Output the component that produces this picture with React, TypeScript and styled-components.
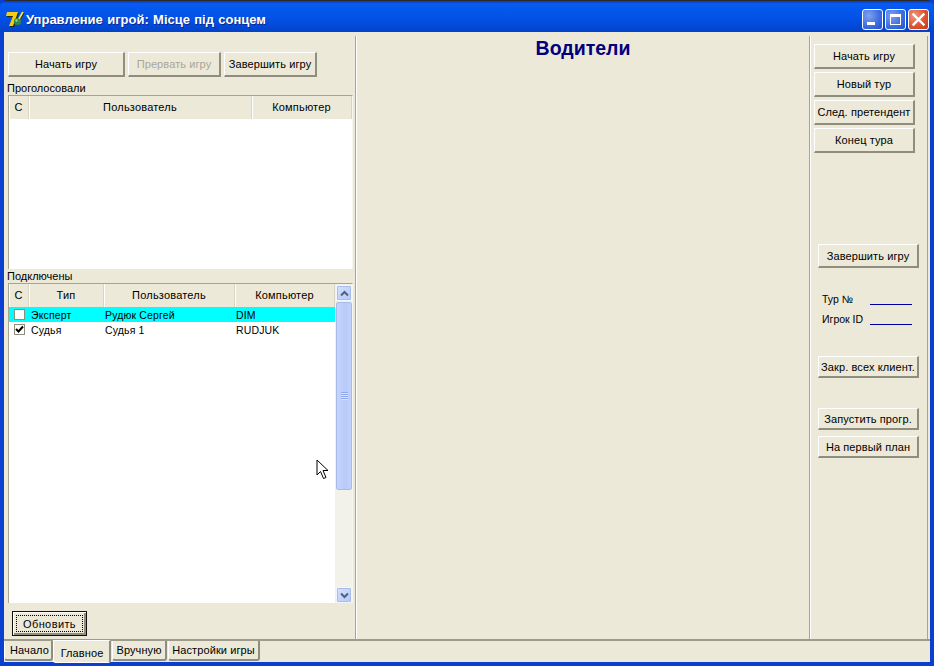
import React from "react";
import styled, { createGlobalStyle } from "styled-components";

const Global = createGlobalStyle`
  html, body { margin: 0; padding: 0; background: #0a3fd0; }
  body { font-family: "Liberation Sans", Arial, sans-serif; font-size: 11px; color: #000; }
  * { box-sizing: border-box; }
`;

const Window = styled.div`
  position: relative;
  width: 934px;
  height: 666px;
  overflow: hidden;
  display: flex;
  flex-direction: column;
  border-radius: 7px 7px 0 0;
  background: #0a3fd0;
`;

const TitleBar = styled.div`
  height: 32px;
  flex: none;
  display: flex;
  align-items: center;
  padding: 5px 5px 0 5px;
  background: linear-gradient(180deg, #0a3bc4 0%, #0a5cf0 10%, #0558ee 22%, #0353e6 50%, #0349d8 80%, #0242c8 100%);
  border-top: 1px solid #2a2a2a;
`;

const TitleText = styled.span`
  margin-left: 1px;
  font-size: 13px;
  font-weight: bold;
  color: #fff;
  word-spacing: 0.7px;
  text-shadow: 1px 1px 0 #0a2a90;
  flex: 1;
  white-space: nowrap;
`;

const WinButton = styled.div<{ $kind?: "close" }>`
  width: 21px;
  height: 21px;
  margin-left: 2px;
  border: 1px solid #fff;
  border-radius: 3px;
  display: flex;
  align-items: center;
  justify-content: center;
  background: ${(p) =>
    p.$kind === "close"
      ? "radial-gradient(circle at 30% 30%, #ef9a80, #e0532f 55%, #c23a1a)"
      : "radial-gradient(circle at 30% 30%, #7fa2f0, #3c6be0 60%, #2550c8)"};
`;

const Client = styled.div`
  flex: 1;
  min-height: 0;
  margin: 0 4px 4px 4px;
  background: #ece9d8;
  display: flex;
  flex-direction: column;
`;

const Panels = styled.div`
  height: 609px;
  flex: none;
  display: flex;
  align-items: stretch;
  padding: 4px 2px 0 0;
  border-bottom: 2px solid #9d9b8c;
`;

const LeftPanel = styled.div`
  width: 352px;
  flex: none;
  display: flex;
  flex-direction: column;
  padding: 16px 0 0 4px;
  border-right: 1px solid #a6a493;
`;

const CenterPanel = styled.div`
  width: 454px;
  flex: none;
  border-left: 1px solid #fff;
  border-right: 1px solid #a6a493;
  text-align: center;
  padding-top: 1px;
`;

const Heading = styled.h1`
  margin: 0;
  font-size: 19.5px;
  line-height: 23px;
  font-weight: bold;
  color: #000080;
`;

const RightPanel = styled.div`
  flex: 1;
  display: flex;
  flex-direction: column;
  border-left: 1px solid #fff;
  border-right: 1px solid #a6a493;
  padding: 8px 0 0 3px;
`;

const ButtonRow = styled.div`
  display: flex;
  gap: 3px;
`;

const Button = styled.button<{ $w: number; $h?: number; $disabled?: boolean; $indent?: number; $after?: number }>`
  width: ${(p) => p.$w}px;
  height: ${(p) => p.$h ?? 25}px;
  flex: none;
  padding: 0;
  margin: 0 0 ${(p) => p.$after ?? 0}px ${(p) => p.$indent ?? 0}px;
  font: 11px "Liberation Sans", Arial, sans-serif;
  letter-spacing: 0.1px;
  color: ${(p) => (p.$disabled ? "#a8a698" : "#000")};
  background: #ece9d8;
  border: none;
  border-top: 1px solid #fff;
  border-left: 1px solid #fff;
  border-right: 2px solid #8f8d7e;
  border-bottom: 2px solid #8f8d7e;
  outline: none;
  white-space: nowrap;
`;

const DefaultButton = styled.button`
  width: 75px;
  height: 25px;
  padding: 0;
  margin: 0;
  flex: none;
  font: 11px "Liberation Sans", Arial, sans-serif;
  letter-spacing: 0.4px;
  background: #ece9d8;
  border: 1px solid #111;
  box-shadow: inset 1px 1px 0 #fff, inset -2px -2px 0 #8f8d7e;
  outline: 1px dotted #000;
  outline-offset: -5px;
`;

const GroupLabel = styled.div<{ $top: number }>`
  height: 13px;
  line-height: 13px;
  margin: ${(p) => p.$top}px 0 0 -1px;
  font-size: 11px;
`;

const Grid = styled.div<{ $h: number }>`
  width: 345px;
  height: ${(p) => p.$h}px;
  flex: none;
  display: flex;
  flex-direction: column;
  background: #fff;
  border-top: 1px solid #a6a493;
  border-left: 1px solid #a6a493;
  border-right: 1px solid #f6f5ee;
  overflow: hidden;
`;

const GridBody = styled.div`
  flex: 1;
  min-height: 0;
  display: flex;
`;

const GridMain = styled.div`
  flex: 1;
  min-width: 0;
  display: flex;
  flex-direction: column;
`;

const HeaderRow = styled.div<{ $h: number }>`
  height: ${(p) => p.$h}px;
  flex: none;
  display: flex;
  background: #ece9d8;
`;

const HeaderCell = styled.div<{ $w?: number }>`
  ${(p) => (p.$w ? `width: ${p.$w}px; flex: none;` : "flex: 1;")}
  display: flex;
  align-items: center;
  justify-content: center;
  border-left: 1px solid #fff;
  border-right: 1px solid #d8d5c4;
  font-size: 11px;
  letter-spacing: 0.2px;
  padding: 0 1px 2px 0;
`;

const Row = styled.div<{ $active?: boolean }>`
  height: 15px;
  display: flex;
  align-items: center;
  background: ${(p) => (p.$active ? "#00ffff" : "#fff")};
  font-size: 10.5px;
  letter-spacing: 0.15px;
`;

const CheckCell = styled.div`
  width: 20px;
  flex: none;
  display: flex;
  justify-content: center;
`;

const Check = styled.div`
  width: 11px;
  height: 11px;
  background: #fff;
  border: 1px solid #8f8d7e;
  display: flex;
  align-items: center;
  justify-content: center;
`;

const Cell = styled.div<{ $w: number; $pad?: number }>`
  width: ${(p) => p.$w}px;
  padding-left: ${(p) => p.$pad ?? 1}px;
  flex: none;
  white-space: nowrap;
`;

const Scrollbar = styled.div`
  width: 17px;
  flex: none;
  display: flex;
  flex-direction: column;
  background: #f3f2ea;
`;

const ScrollButton = styled.div`
  width: 16px;
  height: 16px;
  flex: none;
  margin: 1px 0 1px 1px;
  display: flex;
  align-items: center;
  justify-content: center;
  border: 1px solid #f2f5fc;
  border-radius: 2px;
  background: linear-gradient(135deg, #d6e1fb, #b4c7f6);
  box-shadow: 0 0 0 1px #a9bdea inset;
`;

const ScrollThumb = styled.div`
  width: 16px;
  height: 188px;
  flex: none;
  margin-left: 1px;
  display: flex;
  align-items: center;
  justify-content: center;
  background: linear-gradient(90deg, #c6d4fb, #b7cafa 60%, #c3d2fb);
  border: 1px solid #a5bbe8;
  border-radius: 2px;
`;

const Grip = styled.div`
  width: 7px;
  height: 8px;
  background: repeating-linear-gradient(180deg, #8ea9ef 0 1px, #d8e2fc 1px 2px);
`;

const RefreshBar = styled.div`
  flex: 1;
  display: flex;
  padding: 8px 0 0 4px;
`;

const Spacer = styled.div<{ $h: number }>`
  height: ${(p) => p.$h}px;
  flex: none;
`;

const InfoRow = styled.div`
  display: flex;
  align-items: center;
  height: 14px;
  margin: 0 0 6px 8px;
  font-size: 10.5px;
`;

const InfoLabel = styled.span`
  width: 48px;
  flex: none;
`;

const InfoValue = styled.span`
  width: 42px;
  height: 12px;
  flex: none;
  border-bottom: 1px solid #0000a0;
`;

const Tabs = styled.div`
  flex: 1;
  display: flex;
  align-items: flex-start;
`;

const Tab = styled.div<{ $active?: boolean; $w: number; $shift?: number }>`
  width: ${(p) => p.$w}px;
  flex: none;
  height: ${(p) => (p.$active ? 23 : 20)}px;
  margin: ${(p) => (p.$active ? "-1px 1px 0 -1px" : "0 1px 0 0")};
  display: flex;
  align-items: center;
  justify-content: center;
  font-size: 11px;
  letter-spacing: 0.1px;
  background: #ece9d8;
  border-left: 1px solid #fff;
  border-top: ${(p) => (p.$active ? "1px solid #fff" : "none")};
  border-right: 2px solid #8f8d7e;
  border-bottom: ${(p) => (p.$active ? "1px solid #fff" : "2px solid #8f8d7e")};
  border-radius: 0 0 3px 3px;
  padding-top: ${(p) => (p.$active ? 2 : 0)}px;
  padding-left: ${(p) => p.$shift ?? 0}px;
`;

const Cursor = styled.svg`
  position: absolute;
  left: 316px;
  top: 459px;
`;

const CheckMark = () => (
  <svg width="9" height="9" viewBox="0 0 9 9">
    <path d="M1 4 L3.5 6.5 L8 1.5" fill="none" stroke="#000" strokeWidth="2" />
  </svg>
);

const AppIcon = () => (
  <svg width="20" height="20" viewBox="0 0 20 20">
    <path d="M2 3 H13 L12 6 L8 17 H4 L8 7 H1 Z" fill="#2a2400" transform="translate(1 1)" />
    <path d="M2 3 H13 L12 6 L8 17 H4 L8 7 H1 Z" fill="#f4cc10" />
    <circle cx="12.5" cy="12.5" r="3.6" fill="#2f8a4a" />
    <circle cx="11.5" cy="11.5" r="1.2" fill="#9ed0a0" />
    <path d="M14 10 L18 3" stroke="#f4e040" strokeWidth="2" />
    <path d="M15.5 10 L19 4" stroke="#3a3000" strokeWidth="1" />
  </svg>
);

export default function App() {
  return (
    <Window>
      <Global />
      <TitleBar>
        <AppIcon />
        <TitleText>Управление игрой: Місце під сонцем</TitleText>
        <WinButton>
          <svg width="19" height="19" viewBox="0 0 19 19">
            <rect x="4" y="12" width="8" height="3" fill="#fff" />
          </svg>
        </WinButton>
        <WinButton>
          <svg width="19" height="19" viewBox="0 0 19 19">
            <rect x="4.5" y="4.5" width="10" height="10" fill="none" stroke="#fff" strokeWidth="1" />
            <rect x="4" y="4" width="11" height="3" fill="#fff" />
          </svg>
        </WinButton>
        <WinButton $kind="close">
          <svg width="19" height="19" viewBox="0 0 19 19">
            <path d="M4.5 4.5 L14.5 14.5 M14.5 4.5 L4.5 14.5" stroke="#fff" strokeWidth="2.4" strokeLinecap="square" />
          </svg>
        </WinButton>
      </TitleBar>
      <Client>
        <Panels>
          <LeftPanel>
            <ButtonRow>
              <Button $w={117}>Начать игру</Button>
              <Button $w={93} $disabled>Прервать игру</Button>
              <Button $w={93}>Завершить игру</Button>
            </ButtonRow>
            <GroupLabel $top={5}>Проголосовали</GroupLabel>
            <Grid $h={174}>
              <HeaderRow $h={23}>
                <HeaderCell $w={20}>С</HeaderCell>
                <HeaderCell $w={223}>Пользователь</HeaderCell>
                <HeaderCell>Компьютер</HeaderCell>
              </HeaderRow>
            </Grid>
            <GroupLabel $top={1}>Подключены</GroupLabel>
            <Grid $h={320}>
              <GridBody>
                <GridMain>
                  <HeaderRow $h={23}>
                    <HeaderCell $w={20}>С</HeaderCell>
                    <HeaderCell $w={75}>Тип</HeaderCell>
                    <HeaderCell $w={131}>Пользователь</HeaderCell>
                    <HeaderCell>Компьютер</HeaderCell>
                  </HeaderRow>
                  <Row $active>
                    <CheckCell><Check /></CheckCell>
                    <Cell $w={75} $pad={2}>Эксперт</Cell>
                    <Cell $w={131}>Рудюк Сергей</Cell>
                    <Cell $w={90}>DIM</Cell>
                  </Row>
                  <Row>
                    <CheckCell><Check><CheckMark /></Check></CheckCell>
                    <Cell $w={75} $pad={2}>Судья</Cell>
                    <Cell $w={131}>Судья 1</Cell>
                    <Cell $w={90}>RUDJUK</Cell>
                  </Row>
                </GridMain>
                <Scrollbar>
                  <ScrollButton>
                    <svg width="9" height="7" viewBox="0 0 9 7">
                      <path d="M1 5.5 L4.5 2 L8 5.5" fill="none" stroke="#4d6185" strokeWidth="2" />
                    </svg>
                  </ScrollButton>
                  <ScrollThumb><Grip /></ScrollThumb>
                  <Spacer $h={96} />
                  <ScrollButton>
                    <svg width="9" height="7" viewBox="0 0 9 7">
                      <path d="M1 1.5 L4.5 5 L8 1.5" fill="none" stroke="#4d6185" strokeWidth="2" />
                    </svg>
                  </ScrollButton>
                </Scrollbar>
              </GridBody>
            </Grid>
            <RefreshBar>
              <DefaultButton>Обновить</DefaultButton>
            </RefreshBar>
          </LeftPanel>
          <CenterPanel>
            <Heading>Водители</Heading>
          </CenterPanel>
          <RightPanel>
            <Button $w={101} $after={3}>Начать игру</Button>
            <Button $w={101} $after={3}>Новый тур</Button>
            <Button $w={101} $after={3}>След. претендент</Button>
            <Button $w={101}>Конец тура</Button>
            <Spacer $h={91} />
            <Button $w={101} $h={24} $indent={4} $after={24}>Завершить игру</Button>
            <InfoRow><InfoLabel>Тур №</InfoLabel><InfoValue /></InfoRow>
            <InfoRow><InfoLabel>Игрок ID</InfoLabel><InfoValue /></InfoRow>
            <Spacer $h={24} />
            <Button $w={101} $h={22} $indent={4} $after={30}>Закр. всех клиент.</Button>
            <Button $w={101} $h={22} $indent={4} $after={6}>Запустить прогр.</Button>
            <Button $w={101} $h={22} $indent={4}>На первый план</Button>
          </RightPanel>
        </Panels>
        <Tabs>
          <Tab $w={49} $shift={3}>Начало</Tab>
          <Tab $w={58} $active $shift={1}>Главное</Tab>
          <Tab $w={55}>Вручную</Tab>
          <Tab $w={92}>Настройки игры</Tab>
        </Tabs>
      </Client>
      <Cursor width="14" height="22" viewBox="0 0 14 22">
        <path d="M1 1 L1 16 L4.5 12.5 L7.5 19.5 L10 18.5 L7 11.5 L12 11.5 Z" fill="#fff" stroke="#000" strokeWidth="1" />
      </Cursor>
    </Window>
  );
}
